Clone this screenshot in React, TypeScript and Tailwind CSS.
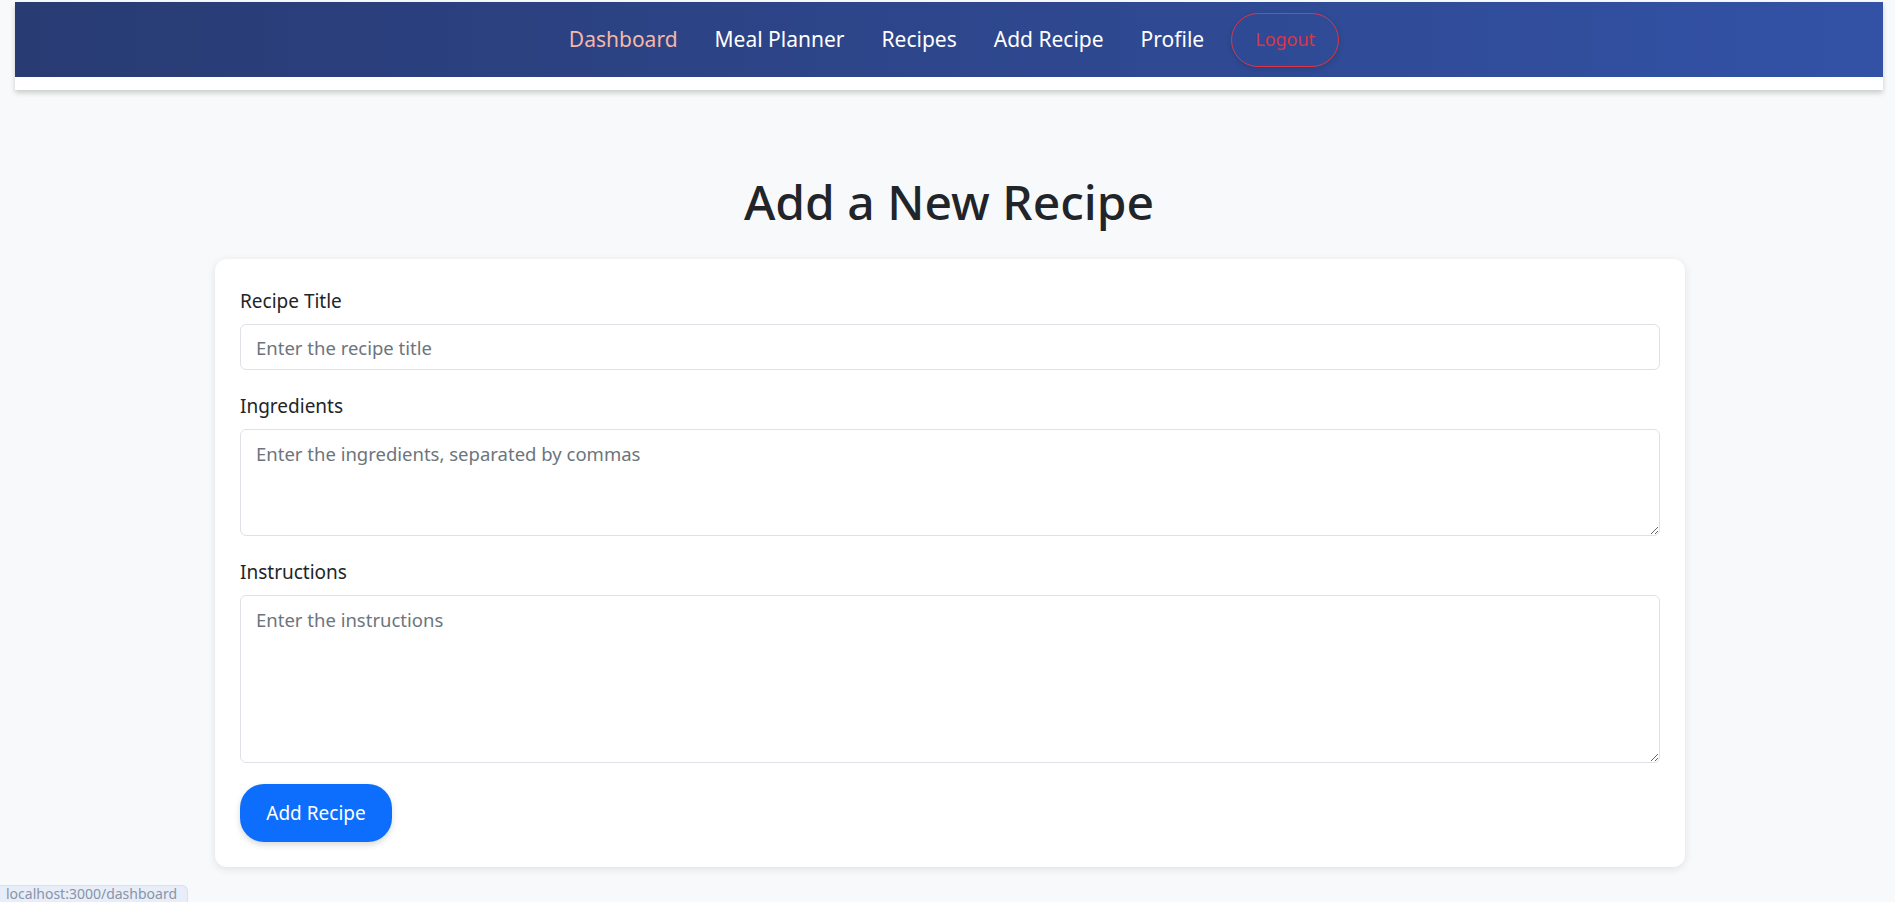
import React from 'react'

const FONT = { fontFamily: '"Noto Sans", "Open Sans", sans-serif' }

const NavLink = ({ label, active }: { label: string, active?: boolean }) => (
    <a href="#" className={active ? "text-[21px] text-[#f5b7a8]" : "text-[21px] text-white"}>
        {label}
    </a>
)

const Field = ({ label, children }: { label: string, children: React.ReactNode }) => (
    <div className="flex flex-col">
        <label className="text-[19px] leading-[28px] text-[#212529] mb-[9px]">{label}</label>
        {children}
    </div>
)

const App = () => {
    return (
        <div className="h-[902px] overflow-hidden bg-[#f8f9fa] relative" style={FONT}>
            {/* Navbar */}
            <div className="pt-[2px]">
                <div className="ml-[15px] mr-[12px] bg-white pb-[13px] shadow-[0_3px_5px_rgba(0,0,0,0.18)]">
                    <nav className="h-[75px] bg-gradient-to-r from-[#283b73] to-[#3352a6] flex items-center justify-center gap-[37px] pl-[10px]">
                        <NavLink label="Dashboard" active />
                        <NavLink label="Meal Planner" />
                        <NavLink label="Recipes" />
                        <NavLink label="Add Recipe" />
                        <NavLink label="Profile" />
                        <button className="-ml-[10px] w-[108px] h-[54px] rounded-[27px] border border-[#dc3545] text-[#dc3545] text-[18px] shadow-[0_2px_6px_rgba(0,0,0,0.15)]">
                            Logout
                        </button>
                    </nav>
                </div>
            </div>

            {/* Heading */}
            <h1 className="text-center text-[48px] font-medium text-[#212529] leading-[56px] mt-[84px] mb-[29px] pl-[3px]">
                Add a New Recipe
            </h1>

            {/* Form card */}
            <div className="flex justify-center pl-[5px]">
                <div className="w-[1470px] bg-white rounded-[12px] shadow-[0_2px_8px_rgba(0,0,0,0.1)] px-[25px] pt-[28px] pb-[25px]">
                    <form className="flex flex-col gap-[22px]">
                        <Field label="Recipe Title">
                            <input
                                type="text"
                                placeholder="Enter the recipe title"
                                className="h-[46px] w-full rounded-[6px] border border-[#dee2e6] px-[15px] text-[18.5px] text-[#212529] placeholder:text-[#6c757d] outline-none"
                            />
                        </Field>
                        <Field label="Ingredients">
                            <textarea
                                placeholder="Enter the ingredients, separated by commas"
                                className="h-[107px] w-full rounded-[6px] border border-[#dee2e6] px-[15px] py-[10px] text-[18.5px] leading-[27px] text-[#212529] placeholder:text-[#6c757d] outline-none"
                            />
                        </Field>
                        <Field label="Instructions">
                            <textarea
                                placeholder="Enter the instructions"
                                className="h-[168px] w-full rounded-[6px] border border-[#dee2e6] px-[15px] py-[10px] text-[18.5px] leading-[27px] text-[#212529] placeholder:text-[#6c757d] outline-none"
                            />
                        </Field>
                        <div className="-mt-[1px]">
                            <button
                                type="button"
                                className="w-[152px] h-[58px] rounded-[24px] bg-[#0d6efd] text-white text-[19px] shadow-[0_3px_6px_rgba(0,0,0,0.15)]"
                            >
                                Add Recipe
                            </button>
                        </div>
                    </form>
                </div>
            </div>

            {/* Browser status bar */}
            <div className="absolute left-0 bottom-0 w-[188px] h-[17px] bg-[#e7eef9] rounded-tr-[6px] border-t border-r border-[#d7e0ee] text-[14px] leading-[16px] text-[#8a94a6] pl-[6px] overflow-hidden whitespace-nowrap">
                localhost:3000/dashboard
            </div>
        </div>
    )
}

export default App
